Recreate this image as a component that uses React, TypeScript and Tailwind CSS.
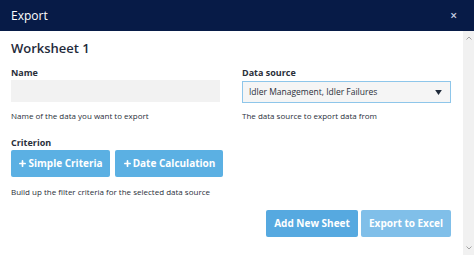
import { Plus } from 'lucide-react';

export default function App() {
  return (
    <div
      className="w-[474px] h-[255px] flex flex-col overflow-hidden bg-white text-[#2a2f3a]"
      style={{ fontFamily: '"Open Sans", "Noto Sans", sans-serif' }}
    >
      {/* Header */}
      <div className="h-[31px] shrink-0 bg-[#071b47] flex items-center justify-between pl-[11px] pr-[17px]">
        <span className="text-white text-[12px] leading-none">Export</span>
        <span className="text-[#c9d2e3] text-[12px] leading-none font-semibold">×</span>
      </div>

      <div className="flex flex-1 min-h-0">
        {/* Body */}
        <div className="flex-1 pl-[11px] pr-[12px] pt-[8px]">
          <h2 className="text-[13px] leading-[18px] font-semibold text-[#1f2a3a]">Worksheet 1</h2>

          <div className="grid grid-cols-2 gap-x-[22px] mt-[10px]">
            <div>
              <label className="block text-[9px] leading-[12px] font-bold">Name</label>
              <div className="mt-[1px] h-[22px] bg-[#f2f2f2]" />
              <p className="mt-[8px] text-[8px] leading-[12px]">Name of the data you want to export</p>
            </div>
            <div>
              <label className="block text-[9px] leading-[12px] font-bold">Data source</label>
              <div className="mt-[2px] h-[22px] bg-[#f5f5f5] border border-[#8ec6ea] flex items-center justify-between pl-[6px] pr-[8px]">
                <span className="text-[8.5px] leading-none">Idler Management, Idler Failures</span>
                <svg width="7" height="5" viewBox="0 0 8 6">
                  <path d="M0 0h8L4 6z" fill="#1f2a3a" />
                </svg>
              </div>
              <p className="mt-[7px] text-[8px] leading-[12px]">The data source to export data from</p>
            </div>
          </div>

          <label className="block mt-[15px] text-[9px] leading-[12px] font-bold">Criterion</label>
          <div className="flex gap-[5px] mt-[1px]">
            <button className="h-[27px] w-[99px] bg-[#5bb0e3] rounded-[2px] text-white text-[10px] font-bold flex items-center justify-center gap-[1px]">
              <Plus size={9} strokeWidth={4.5} />
              Simple Criteria
            </button>
            <button className="h-[27px] w-[108px] bg-[#5bb0e3] rounded-[2px] text-white text-[10px] font-bold flex items-center justify-center gap-[1px]">
              <Plus size={9} strokeWidth={4.5} />
              Date Calculation
            </button>
          </div>
          <p className="mt-[9px] text-[8px] leading-[12px]">Build up the filter criteria for the selected data source</p>

          <div className="flex justify-end gap-[3px] mt-[12px]">
            <button className="h-[27px] w-[92px] bg-[#56a9e0] rounded-[2px] text-white text-[10px] font-bold">
              Add New Sheet
            </button>
            <button className="h-[27px] w-[90px] bg-[#80bfe9] rounded-[2px] text-white text-[10px] font-bold">
              Export to Excel
            </button>
          </div>
        </div>

        {/* Scrollbar */}
        <div className="w-[11px] shrink-0 bg-[#f1f1f1] flex flex-col justify-between items-center py-[5px]">
          <svg width="6" height="4" viewBox="0 0 6 4">
            <path d="M0.5 3.5L3 1l2.5 2.5" fill="none" stroke="#a3a3a3" strokeWidth="1" />
          </svg>
          <svg width="6" height="4" viewBox="0 0 6 4">
            <path d="M0.5 0.5L3 3l2.5-2.5" fill="none" stroke="#a3a3a3" strokeWidth="1" />
          </svg>
        </div>
      </div>
    </div>
  );
}
